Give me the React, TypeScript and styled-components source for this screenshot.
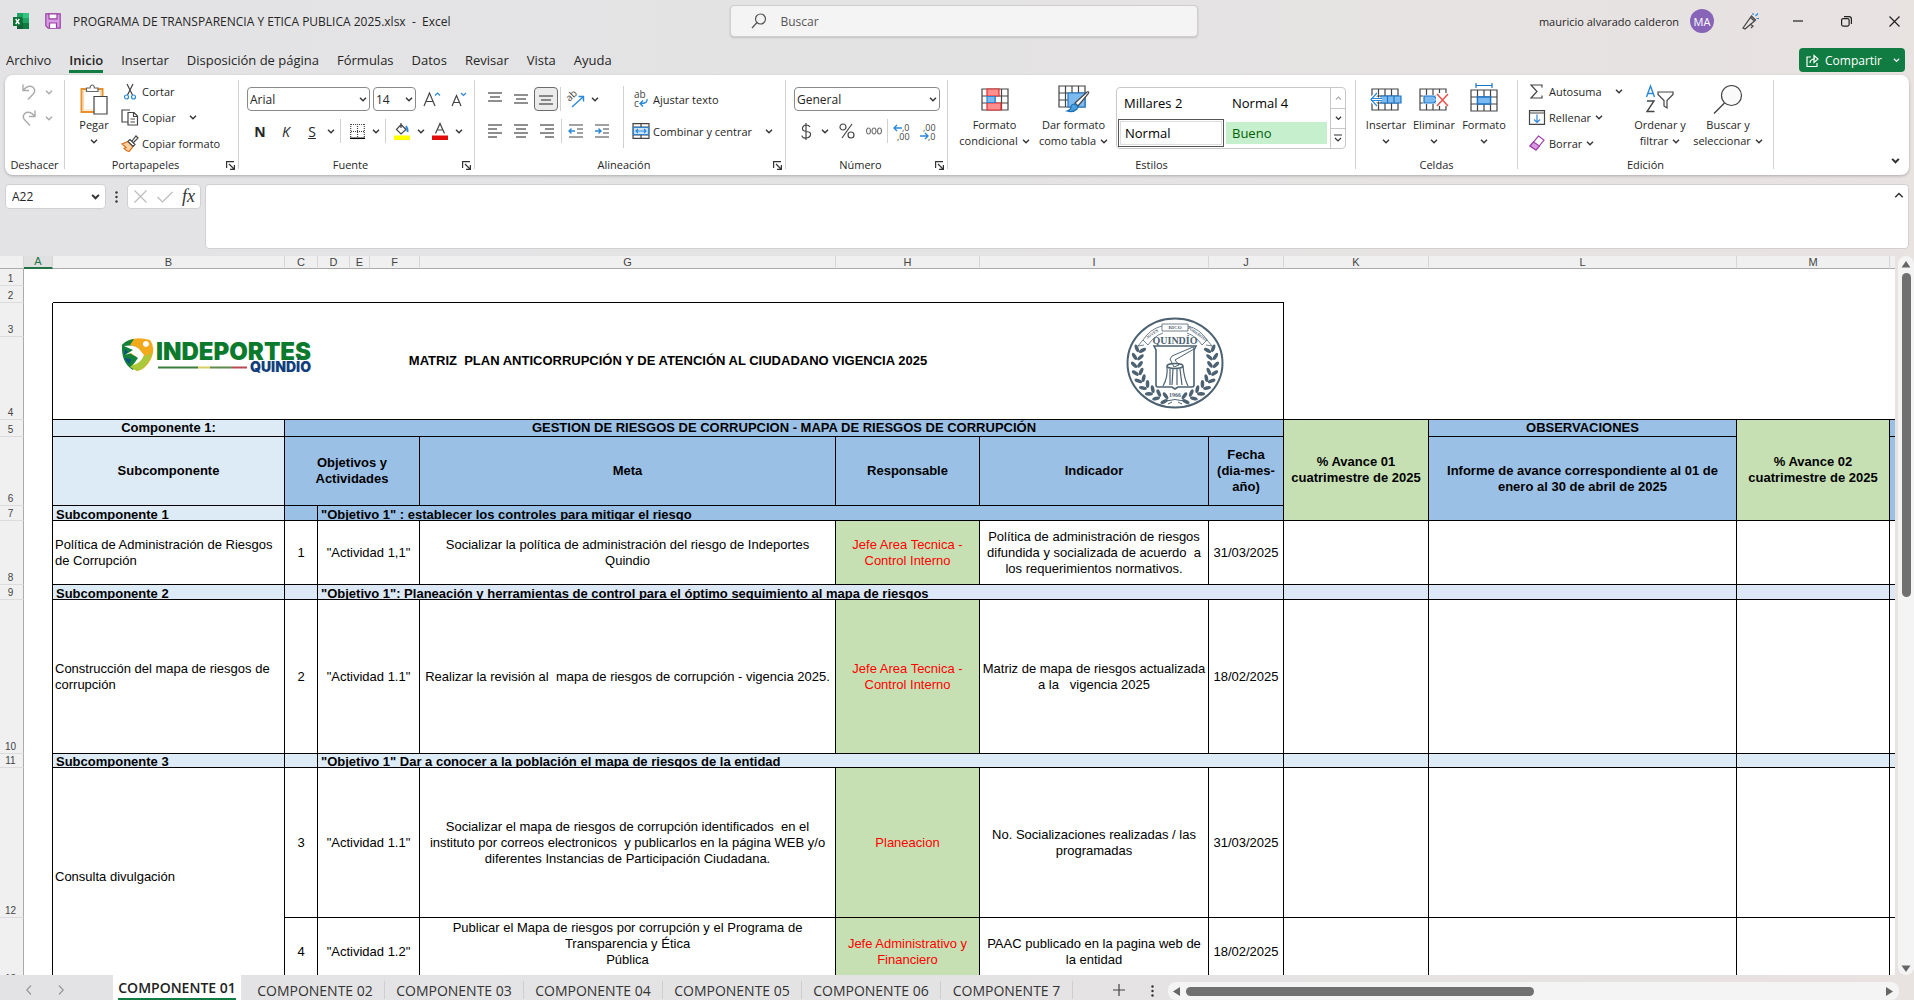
import React from 'react';
import styled, { createGlobalStyle, css } from 'styled-components';

const ui = `"Open Sans", "Noto Sans", sans-serif`;
const sheetFont = `"Liberation Sans", Arial, sans-serif`;
const ink = '#262626';
const blue = '#2b88d8';
const C = { pale: '#ddebf7', ice: '#dde8f7', mid: '#9bc0e6', green: '#c6e0b4' };

const Global = createGlobalStyle`
  * { box-sizing: border-box; }
  html, body, #root { height: 100%; }
  body { margin: 0; overflow: hidden; font-family: ${ui}; color: ${ink}; }
  button, input, select, textarea { font-family: inherit; color: inherit; }
  button { border: 0; background: none; padding: 0; white-space: nowrap; }
  svg { display: block; flex: none; overflow: visible; }
`;

const Window = styled.div`
  height: 100vh;
  display: flex;
  flex-direction: column;
  background: linear-gradient(90deg, #e3e3e5 0%, #e4e3e4 50%, #e8e2e1 100%);
`;

/* ---------- title bar ---------- */
const TitleBar = styled.header`
  display: grid;
  grid-template-columns: minmax(0, 1fr) 468px minmax(0, 1fr);
  align-items: center;
  height: 42px;
  padding-left: 13px;
`;
const TitleLeft = styled.div`
  display: flex;
  align-items: center;
  gap: 16px;
`;
const DocName = styled.span`
  font-size: 12px;
  margin-left: -4px;
  white-space: pre;
`;
const Search = styled.label`
  display: flex;
  align-items: center;
  gap: 12px;
  height: 32px;
  padding-left: 20px;
  background: #f5f4f5;
  border: 1px solid #cfcdce;
  border-radius: 4px;
  box-shadow: 0 1px 2px rgba(0, 0, 0, 0.15);
  input {
    flex: 1;
    border: 0;
    outline: 0;
    background: none;
    font-size: 12px;
  }
  input::placeholder { color: #555; opacity: 1; }
`;
const TitleRight = styled.div`
  display: flex;
  align-items: center;
  justify-content: flex-end;
  padding-right: 8px;
  font-size: 11px;
`;
const Avatar = styled.span`
  display: flex;
  align-items: center;
  justify-content: center;
  width: 24px;
  height: 24px;
  margin: 0 12px 0 11px;
  border-radius: 50%;
  background: #8764b8;
  color: #fff;
  font-size: 11px;
`;
const WinButton = styled.button`
  display: flex;
  align-items: center;
  justify-content: center;
  width: 48px;
  height: 32px;
  &:last-child { width: 24px; margin-left: 12px; }
`;

/* ---------- ribbon tabs ---------- */
const TabBar = styled.nav`
  display: flex;
  align-items: center;
  height: 33px;
  padding: 3px 9px 0 6px;
`;
const TabLink = styled.a<{ $active?: boolean }>`
  display: block;
  margin-right: 18px;
  height: 25px;
  padding-top: 3px;
  color: ${ink};
  font-size: 13px;
  line-height: 18px;
  text-decoration: none;
  white-space: nowrap;
  ${(p) => p.$active && css`
    font-weight: 600;
    border-bottom: 3px solid #107c41;
  `}
`;
const Share = styled.button`
  display: flex;
  align-items: center;
  gap: 6px;
  width: 106px;
  height: 24px;
  margin-left: auto;
  padding: 0 5px 0 7px;
  border-radius: 4px;
  background: #107c41;
  color: #fff;
  font-size: 12px;
  svg:last-child { margin-left: auto; }
`;

/* ---------- ribbon ---------- */
const Ribbon = styled.section`
  display: flex;
  height: 100px;
  margin: 0 5px;
  background: #fff;
  border-radius: 8px;
  box-shadow: 0 1px 3px rgba(0, 0, 0, 0.25);
`;
const GroupBox = styled.div<{ $w: number }>`
  display: flex;
  flex-direction: column;
  flex: 0 0 ${(p) => p.$w}px;
`;
const GroupBody = styled.div<{ $left?: number; $gap?: number }>`
  display: flex;
  height: 81px;
  gap: ${(p) => p.$gap ?? 0}px;
  padding-left: ${(p) => p.$left ?? 0}px;
`;
const GroupFoot = styled.div`
  display: flex;
  align-items: center;
  height: 18px;
  span {
    flex: 1;
    text-align: center;
    font-size: 11px;
    line-height: 18px;
  }
  button { width: 12px; }
`;
const Separator = styled.div`
  width: 1px;
  margin: 5px 0 6px;
  background: #d0d0d0;
`;
const Stack = styled.div<{ $w?: number }>`
  display: flex;
  flex-direction: column;
  width: ${(p) => (p.$w ? `${p.$w}px` : 'auto')};
  padding-top: 4px;
`;
const ToolRows = styled.div`
  display: flex;
  flex-direction: column;
  gap: 6px;
  padding-top: 11px;
`;
const Row = styled.div`
  display: flex;
  align-items: center;
  height: 26px;
`;
const Tool = styled.button<{ $on?: boolean; $w?: number }>`
  display: flex;
  align-items: center;
  justify-content: center;
  width: ${(p) => p.$w ?? 26}px;
  height: 24px;
  font-size: 14px;
  ${(p) => p.$on && css`
    background: #ebebeb;
    border: 1px solid #6b6b6b;
    border-radius: 4px;
  `}
`;
const Divider = styled.div<{ $m?: number; $tall?: boolean }>`
  width: 1px;
  height: ${(p) => (p.$tall ? 62 : 24)}px;
  margin: ${(p) => (p.$tall ? 11 : 0)}px ${(p) => p.$m ?? 1}px 0;
  background: #d0d0d0;
`;
const TextTool = styled.button<{ $chev?: number }>`
  display: flex;
  align-items: center;
  gap: 3px;
  height: 26px;
  font-size: 11px;
  svg:first-child { width: 18px; }
  span + svg { margin-left: ${(p) => p.$chev ?? 1}px; }
`;
const BigTool = styled.button<{ $w: number }>`
  display: flex;
  flex-direction: column;
  align-items: center;
  width: ${(p) => p.$w}px;
  padding-top: 6px;
  font-size: 11px;
  line-height: 16px;
  text-align: center;
`;
const BigIcon = styled.span`
  display: flex;
  align-items: center;
  height: 36px;
`;
const BigLine = styled.span`
  display: flex;
  align-items: center;
  justify-content: center;
  gap: 4px;
  height: 16px;
`;
const PickWrap = styled.label<{ $w: number }>`
  position: relative;
  display: block;
  width: ${(p) => p.$w}px;
  margin-right: 3px;
  select {
    appearance: none;
    width: 100%;
    height: 24px;
    padding: 0 2px;
    border: 1px solid #8a8a8a;
    border-radius: 4px;
    background: #fff;
    font-size: 12px;
  }
  svg { position: absolute; right: 3px; top: 10px; }
`;
const Gallery = styled.div`
  display: flex;
  width: 230px;
  height: 62px;
  margin: 12px 0 0 3px;
  border: 1px solid #c8c8c8;
  border-radius: 4px;
`;
const Styles = styled.div`
  flex: 1;
  display: grid;
  grid-template-columns: 106px 101px;
  grid-template-rows: 30px 29px;
  column-gap: 2px;
  align-items: center;
  padding-left: 1px;
`;
const StyleItem = styled.button<{ $kind?: 'sel' | 'good' }>`
  height: 24px;
  padding-left: 6px;
  text-align: left;
  font-size: 13px;
  color: #000;
  ${(p) => p.$kind === 'sel' && css`height: 28px; border: 1px solid #555; outline: 1px solid #ddd; outline-offset: -3px;`}
  ${(p) => p.$kind === 'good' && css`height: 22px; background: #c6efce; color: #006100;`}
`;
const GalleryNav = styled.div`
  display: grid;
  grid-template-rows: 1fr 1fr 1fr;
  width: 15px;
  border-left: 1px solid #c8c8c8;
  button { display: flex; align-items: center; justify-content: center; }
  button + button { border-top: 1px solid #c8c8c8; }
`;
const Collapse = styled.button`
  display: flex;
  align-items: flex-end;
  margin: 0 9px 11px auto;
`;

/* ---------- formula bar ---------- */
const FormulaBar = styled.section`
  display: flex;
  align-items: flex-start;
  padding: 9px 5px 7px;
`;
const Field = styled.div<{ $w: number }>`
  display: flex;
  align-items: center;
  justify-content: space-between;
  width: ${(p) => p.$w}px;
  height: 25px;
  padding: 0 5px 0 6px;
  border: 1px solid #d2d0d1;
  border-radius: 4px;
  background: #fff;
  input {
    width: 60px;
    padding: 0;
    border: 0;
    background: none;
    font-size: 12px;
    outline: 0;
  }
`;
const Grip = styled.div<{ $top: number }>`
  display: flex;
  justify-content: center;
  width: 21px;
  padding-top: ${(p) => p.$top}px;
`;
const FormulaBox = styled.div`
  display: flex;
  flex: 1;
  height: 65px;
  margin-left: 4px;
  padding-right: 4px;
  border: 1px solid #d2d0d1;
  border-radius: 4px;
  background: #fff;
  textarea { flex: 1; border: 0; resize: none; outline: 0; background: none; }
  button { align-self: flex-start; padding-top: 7px; }
`;
const FxText = styled.span`
  font: italic 400 18px "Liberation Serif", serif;
  color: #333;
`;

/* ---------- sheet ---------- */
const Main = styled.main`
  display: flex;
  flex: 1;
  min-height: 0;
`;
const SheetView = styled.div`
  flex: 1;
  min-width: 0;
  overflow: hidden;
  background: #fff;
`;
const Sheet = styled.table`
  width: 2198px;
  table-layout: fixed;
  border-collapse: separate;
  border-spacing: 0;
  font-family: ${sheetFont};
  font-size: 13px;
  line-height: 16px;
  color: #000;
`;
const Col = styled.col<{ $w: number }>`
  width: ${(p) => p.$w}px;
`;
const Tr = styled.tr<{ $h: number }>`
  height: ${(p) => p.$h}px;
`;
const ColHead = styled.th<{ $on?: boolean }>`
  height: 13px;
  padding: 0;
  background: #f0f0f0;
  border-right: 1px solid #d6d6d6;
  border-bottom: 1px solid #ababab;
  color: #444;
  font-size: 11px;
  line-height: 11px;
  font-weight: 400;
  ${(p) => p.$on && css`background: #e0e0e0; color: #217346; border-bottom: 2px solid #217346;`}
`;
const RowHead = styled.th`
  padding: 0 2px 1px 0;
  background: #f0f0f0;
  border-right: 1px solid #ababab;
  border-bottom: 1px solid #dcdcdc;
  color: #444;
  font-size: 10px;
  line-height: 11px;
  font-weight: 400;
  vertical-align: bottom;
`;
const Cell = styled.td<{
  $bg?: string; $bold?: boolean; $left?: boolean; $red?: boolean; $plain?: boolean; $noRight?: boolean; $noBottom?: boolean;
}>`
  padding: 0 ${(p) => (p.$left ? 2 : 0)}px;
  background: ${(p) => p.$bg ?? 'transparent'};
  color: ${(p) => (p.$red ? '#f00' : '#000')};
  font-weight: ${(p) => (p.$bold ? 700 : 400)};
  text-align: ${(p) => (p.$left ? 'left' : 'center')};
  vertical-align: middle;
  white-space: pre-wrap;
  border-right: ${(p) => (p.$plain || p.$noRight ? 0 : 1)}px solid #000;
  border-bottom: ${(p) => (p.$plain || p.$noBottom ? 0 : 1)}px solid #000;
`;
const Clip = styled.div`
  height: 13px;
  overflow: hidden;
  padding-left: 1px;
  line-height: 15px;
  white-space: pre;
`;
const Banner = styled.div`
  display: grid;
  grid-template-columns: 1fr auto 1fr;
  align-items: center;
  padding: 0 59px;
  svg:first-child { margin: 0 0 12px 8px; }
  svg:last-child { justify-self: end; margin-top: 4px; }
`;

/* ---------- scroll bars and sheet tabs ---------- */
const VScroll = styled.div`
  display: flex;
  flex-direction: column;
  align-items: center;
  width: 16px;
  margin-left: 3px;
  padding: 4px 0 2px;
  border-radius: 8px;
  background: #f4f4f4;
  svg:last-child { margin-top: auto; }
`;
const VThumb = styled.div`
  width: 9px;
  height: 324px;
  margin-top: 4px;
  border-radius: 5px;
  background: #707070;
`;
const Bottom = styled.footer`
  display: flex;
  height: 25px;
`;
const Arrows = styled.div`
  display: flex;
  align-items: center;
  gap: 26px;
  width: 113px;
  padding: 5px 0 0 26px;
`;
const SheetTab = styled.button<{ $active?: boolean }>`
  display: flex;
  align-items: center;
  justify-content: center;
  width: 139px;
  height: 18px;
  margin-top: 6px;
  border-right: 1px solid #cfcdce;
  font-size: 14px;
  color: #333;
  &:last-of-type { width: 132px; }
  ${(p) => p.$active && css`
    width: 128px;
    height: 25px;
    margin: 0 5px 0 0;
    padding: 0 6px;
    border: 0;
    background: #fff;
    span {
      height: 25px;
      padding-top: 3px;
      line-height: 20px;
      font-weight: 600;
      border-bottom: 2px solid #107c41;
      color: #222;
    }
  `}
`;
const TabStrip = styled.div`
  display: flex;
`;
const AddTab = styled.button`
  margin: 5px 17px 0 40px;
`;
const HScroll = styled.div`
  display: flex;
  align-items: center;
  flex: 1;
  height: 18px;
  margin: 7px 15px 0 5px;
  padding: 0 4px;
  border-radius: 8px;
  background: #f4f4f4;
  svg:last-child { margin-left: auto; }
`;
const HThumb = styled.div`
  width: 348px;
  height: 9px;
  margin-left: 4px;
  border-radius: 5px;
  background: #707070;
`;

/* ---------- icons ---------- */
const Chev = ({ s = 8, up = false, c = '#333', w = 1.4 }: { s?: number; up?: boolean; c?: string; w?: number }) => (
  <svg width={s} height={s * 0.625} viewBox="0 0 8 5" fill="none" stroke={c} strokeWidth={w}>
    <path d={up ? 'M1 4.2 4 1.2 7 4.2' : 'M1 .8 4 3.8 7 .8'} />
  </svg>
);
const Svg = ({ w = 16, h = 16, children, c = '#444' }: { w?: number; h?: number; children: React.ReactNode; c?: string }) => (
  <svg width={w} height={h} viewBox={`0 0 ${w} ${h}`} fill="none" stroke={c} strokeWidth={1.2}>{children}</svg>
);
const Launcher = () => (
  <Svg w={9} h={9} c="#333"><path d="M.6 7V.6H8M3 3l5 5M8.4 4v4.4H4" /></Svg>
);
const Tri = ({ d }: { d: 'up' | 'down' | 'left' | 'right' }) => {
  const p = { up: 'M5 1 9.5 7.5H.5Z', down: 'M5 8 .5 1.5h9Z', left: 'M1 4.5 8 0v9Z', right: 'M8 4.5 1 0v9Z' }[d];
  return <svg width="10" height="9" viewBox="0 0 10 9"><path d={p} fill="#666" /></svg>;
};
const Lines = ({ rows }: { rows: [number, number, number][] }) => (
  <Svg w={14} h={14}>
    {rows.map(([x, y, l]) => <path key={y} d={`M${x} ${y}h${l}`} />)}
  </Svg>
);
const ExcelLogo = () => (
  <svg width="16" height="16" viewBox="0 0 16 16">
    <path d="M4 0h7v5H4z" fill="#21a366" /><path d="M10 0h6v5h-6z" fill="#33c481" />
    <path d="M4 5h6v5H4z" fill="#107c41" /><path d="M10 5h6v5h-6z" fill="#21a366" />
    <path d="M4 10h12v6H4z" fill="#185c37" /><path d="M10 10h6v6h-6z" fill="#107c41" />
    <path d="M0 4h9v9H0z" fill="#0f7038" />
    <path d="m2.7 6 3.6 5M6.3 6l-3.6 5" stroke="#fff" strokeWidth="1.4" />
  </svg>
);
const SaveIcon = () => (
  <Svg c="#9b3fa5"><path d="M.8.8h14.400v14.400H3.200L.8 12.800Z" fill="#d69be0" /><path d="M4 .8h8v5H4zM4.500 15v-5h7v5" fill="#fff" /></Svg>
);
const Undo = ({ flip = false }: { flip?: boolean }) => (
  <svg width="14" height="16" viewBox="0 0 14 16" fill="none" stroke="#aaa" strokeWidth="1.400">
    <g transform={flip ? 'translate(14 0) scale(-1 1)' : undefined}>
      <path d="M1 .5v6h6M1.500 6C4 2.500 8 1 11 3.300c2.500 2.500 2 5 0 7L6 15.500" />
    </g>
  </svg>
);
const Paste = () => (
  <Svg w={28} h={31}>
    <path d="M1.500 5h21v23h-21z" fill="#fff" stroke="#e8912d" strokeWidth="2" />
    <path d="M3.500 7h17v19h-17z" fill="#fff" stroke="#fbd9a8" />
    <path d="M6.500 7.500V4H10c.5-4 4-4 4.500 0H18v3.500z" fill="#fff" stroke="#666" />
    <path d="M14 12.500h13V30H14z" fill="#fff" />
  </Svg>
);
const Scissors = () => (
  <Svg w={18}><path d="m6 0 5.500 11M12 0 6.500 11" /><circle cx="5.500" cy="13" r="2" stroke={blue} /><circle cx="12.500" cy="13" r="2" stroke={blue} /></Svg>
);
const CopyIcon = () => (
  <Svg w={18} h={17}><path d="M7 13H1V1h8M7 3.500h6l3.500 3.500v9H7zM12.500 4v3.500H16M9.500 10h4.500M9.500 13h4.500" /></Svg>
);
const Brush = () => (
  <Svg w={18} h={17}><path d="M1 9 7 6.500l5 5-4 5Q5 16 3 13.500l2-1Z" fill="#fbd0a0" stroke="#d96b14" /><path d="m7 6.500 2-2 5 5-2 2zM11 6l4-5 2 2-4.500 4.500" fill="#fff" /></Svg>
);
const BordersIcon = () => (
  <Svg w={15} h={15}><path d="M1 .5h14M1 7.500h14M.7 0v14M7.500 0v14M14.300 0v14" strokeDasharray="1 1" /><path d="M0 14.300h15" stroke="#000" strokeWidth="1.500" /></Svg>
);
const Bucket = () => (
  <Svg w={16} h={17}><path d="m7 1.500 5 5-5 4.500-4.500-4.500zM7 5V0" /><path d="M12 3q2 3 1.500 6" stroke={blue} strokeWidth="2" /><path d="M0 12.500h16V17H0z" fill="#ff0" stroke="none" /></Svg>
);
const FontColor = () => (
  <Svg w={16} h={17}><path d="m3.500 10.500 4.500-10 4.500 10M5 7h6" /><path d="M0 12.500h16V17H0z" fill="#e00b0b" stroke="none" /></Svg>
);
const FontStep = ({ up = false }: { up?: boolean }) => (
  <Svg w={18} h={16}>
    <path d={up ? 'm1 15 5.500-13L12 15M3 10.500h7' : 'm3 15 4.500-10.500L12 15M4.500 11.500h6'} />
    <path d={up ? 'm12 4.500 2.500-2.500L17 4.500' : 'm12 2 2.500 2.500L17 2'} stroke={blue} />
  </Svg>
);
const IconText = styled.text<{ $s: number }>`
  font: ${(p) => p.$s}px ${ui};
  fill: #444;
  stroke: none;
`;
const Orient = () => (
  <Svg w={18} h={17}><g transform="rotate(-45 6 9)"><IconText $s={10} x="2" y="8">ab</IconText></g><path d="M5 16 16 6M11.500 5.500H16.500V10.500" stroke={blue} strokeWidth="1.400" /></Svg>
);
const WrapIcon = () => (
  <Svg w={18} h={18}><IconText $s={10} x="2" y="8">ab</IconText><IconText $s={10} x="2" y="17">c</IconText><path d="M15 9q1 4.500-6.500 4.500M11 10.500l-3 3 3 3" stroke={blue} strokeWidth="1.400" /></Svg>
);
const MergeIcon = () => (
  <Svg w={18}><path d="M1 .7h16v14.600H1zM1 4h16M1 12h16M9 1v3M9 12v3" /><path d="M1.500 4.500h15v7h-15z" fill="#cfe6fa" stroke={blue} /><path d="M4 8h10M6 6 4 8l2 2M12 6l2 2-2 2" stroke={blue} /></Svg>
);
const Dent = ({ out = false }: { out?: boolean }) => (
  <Svg w={14} h={14}><path d="M0 1h14M8 5h6M8 9h6M0 13h14" /><path d={out ? 'M0 7h6M2.500 4.500 0 7l2.500 2.500' : 'M0 7h6M3.500 4.500 6 7 3.500 9.500'} stroke={blue} strokeWidth="1.400" /></Svg>
);
const Decimal = ({ add = false }: { add?: boolean }) => (
  <Svg w={18} h={17}>
    <IconText $s={9} x={add ? 9 : 4} y="8">{add ? ',0' : ',00'}</IconText>
    <IconText $s={9} x={add ? 4 : 9} y="17">{add ? ',00' : ',0'}</IconText>
    <path d={add ? 'M1 5h8M4 2 1 5l3 3' : 'M1 13h8M6 10l3 3-3 3'} stroke={blue} strokeWidth="1.400" />
  </Svg>
);
const gridPath = 'M1 1h26v21H1zM1 8h26M1 15h26M7.500 1v21M14 1v21M20.500 1v21';
const CondIcon = () => (
  <Svg w={28} h={23}><path d={gridPath} /><path d="M6 1h12v7H6zM6 15h14v7H6z" fill="#ff8f8f" stroke="#e03030" /><path d="M6 8.500h8v6H6z" fill="#7dbaf0" stroke={blue} /></Svg>
);
const TableIcon = () => (
  <Svg w={32} h={28}><path d={gridPath} /><path d="M10 8h17v14H10z" fill="#7dbaf0" stroke="#1b76c9" /><path d="m17 18 12-11q3-1 1 2L20 21z" fill="#fff" /><path d="M9 26q4-1 4-4t4-3q4 2 2 5-4 4-10 2z" fill="#4c9fe0" stroke="#1b6fb5" /></Svg>
);
const InsertIcon = () => (
  <Svg w={32} h={23}><g transform="translate(1 0)"><path d={gridPath} /></g><path d="M11 8h20v7H11z" fill="#7dbaf0" stroke="#1b76c9" /><path d="M17.500 8v7M24 8v7" stroke="#1b76c9" /><path d="M7 5 1 11.500 7 18M1 11.500h11" stroke="#fff" strokeWidth="4" /><path d="M7 5 1 11.500 7 18M1 10.500h11M1 12.500h11" stroke={blue} /></Svg>
);
const DeleteIcon = () => (
  <Svg w={30} h={23}><path d={gridPath} /><path d="M4 7h12l4 4.500-4 4.500H4z" fill="#fff" stroke="none" /><path d="M5 8h10l4 3.500-4 3.500H5z" fill="#7dbaf0" stroke="#1b76c9" /><path d="M17 5h12v13H17z" fill="#fff" stroke="none" /><path d="m18 6 11 12M29 6 18 18" stroke="#f0504a" strokeWidth="1.500" /></Svg>
);
const FormatIcon = () => (
  <Svg w={28} h={32}><path d="M6 2.500h16M6 0v5M22 0v5" stroke="#1b76c9" /><g transform="translate(0 6)"><path d={gridPath} /><path d="M7.500 8h13v7h-13z" fill="#7dbaf0" stroke="#1b76c9" strokeWidth="1.500" /></g></Svg>
);
const SortIcon = () => (
  <Svg w={30} h={28}><path d="m1.500 12 4-11 4 11M3 8.500h5.500" stroke={blue} strokeWidth="1.400" /><path d="M2 16h7L2 26.500h7.500" strokeWidth="1.400" /><path d="M13 7h15v2.500l-6 6V23l-3-2v-5.500l-6-6z" /></Svg>
);
const FindIcon = () => (
  <Svg w={30} h={30}><circle cx="18.500" cy="11.500" r="10" fill="#fafafa" /><path d="M11.500 19 1 29.500" strokeWidth="1.400" /></Svg>
);
const SigmaIcon = () => <Svg w={18} h={15}><path d="M14 3.500V1H3l6 6.500L3 14h11v-2.500" /></Svg>;
const FillIcon = () => <Svg w={18} h={15}><path d="M1.500.7h15v13.600h-15zM1.500 3h15" /><path d="M9 4.500v8M6 9.500l3 3 3-3" stroke={blue} /></Svg>;
const EraseIcon = () => <Svg w={18} h={16} c="#a040a8"><path d="m10.500 1 5.500 4L8 15l-6-4z" fill="#fff" /><path d="m5.500 7 6 4L8 15l-6-4z" fill="#d69be0" /></Svg>;

const LogoText = styled.text<{ $s: number; $c: string }>`
  font: 900 ${(p) => p.$s}px Inter, sans-serif;
  fill: ${(p) => p.$c};
`;
const Logo = () => (
  <svg width="197" height="36" viewBox="0 0 197 36">
    <path d="M2 8Q12-2 30 3q6 8 1 19-6 11-14 12Q2 28 2 8z" fill="#f2a91c" />
    <path d="M2 8q4-5 12-6l-4 6 8 3-9 5 10 5-6 12Q1 26 2 8z" fill="#12813b" />
    <path d="m10 30 10-9 12-5q-4 15-15 18z" fill="#a9c93a" />
    <path d="M4 9q10-2 15 3l5 6q-3 8-11 10l5-7-7-5-6 2 8-5zM26 4a3 3 0 1 1-.1 0z" fill="#fff" />
    <path d="m4 21 5 6 2-5zM5 12l3 3-4 3z" fill="#0a4f86" />
    <LogoText $s={24} $c="#0b7a2d" x="36" y="23">INDEPORTES</LogoText>
    <LogoText $s={14} $c="#123f7c" x="130" y="35">QUINDÍO</LogoText>
    <path d="M38 30.500h40" stroke="#3c7d3c" strokeWidth="2" /><path d="M78 30.500h12" stroke="#d8cf5e" strokeWidth="2" />
    <path d="M90 30.500h22" stroke="#5f8a4c" strokeWidth="2" /><path d="M112 30.500h15" stroke="#b84a55" strokeWidth="2" />
  </svg>
);
const SealText = styled.text<{ $s: number }>`
  font: 700 ${(p) => p.$s}px "Liberation Serif", serif;
  fill: #4c6272;
  stroke: none;
  text-anchor: middle;
`;
const leafAngles = [104, 116, 128, 140, 152, 164, 176, 188, 200];
const Seal = () => (
  <svg width="98" height="92" viewBox="0 0 98 92" fill="none" stroke="#4c6272">
    <ellipse cx="49" cy="46" rx="47.500" ry="44.500" strokeWidth="2" />
    {leafAngles.map((a) => {
      const r = (a * Math.PI) / 180;
      const x = 38 * Math.cos(r);
      const y = 37 * Math.sin(r);
      return [-1, 1].map((s) => (
        <g key={`${a}${s}`} transform={`translate(${49 + s * x} ${46 + y}) scale(${s} 1) rotate(${a - 180})`} fill="#4c6272" stroke="none">
          <ellipse cx="-3" cy="-1" rx="4" ry="1.800" transform="rotate(50 -3 -1)" />
          <ellipse cx="3" cy="-1" rx="4" ry="1.800" transform="rotate(-50 3 -1)" />
        </g>
      ));
    })}
    <path d="M36 7h26v7H36zM36 9q-12 3-19 14l5 5q6-9 15-12M62 9q12 3 19 14l-5 5q-6-9-15-12M17 23l-5 6 6-1M81 23l5 6-6-1" fill="#fff" strokeWidth=".8" />
    <SealText $s={5} x="49" y="12">RICO</SealText>
    <SealText $s={4} transform="translate(27 18) rotate(-35)">JOVEN</SealText>
    <SealText $s={4} transform="translate(71 18) rotate(35)">PODEROSO</SealText>
    <SealText $s={10} x="49" y="27">QUINDÍO</SealText>
    <path d="M28 29h42l-2 4v35q0 2-2 2H52l-3 2-3-2H32q-2 0-2-2V33z" strokeWidth="1.600" fill="#fff" />
    <path d="m46 39 21-9 1 2-19 11 4 5-5 2-4-8z" strokeWidth="1" />
    <ellipse cx="49" cy="49" rx="8" ry="2.500" strokeWidth="1.400" />
    <path d="M41 49q1 12-4 20M57 49q1 12 5 20M44 52v16M47 52l-1 16M51 52v16M54 52l2 16" strokeWidth="1.200" />
    <SealText $s={6} x="49" y="80">1966</SealText>
    <path d="M40 84q9-3 18 0M42 87l4-2M56 87l-4-2" />
  </svg>
);

/* ---------- parts ---------- */
const Group = ({ w, name, launch, left, gap, children }: {
  w: number; name: string; launch?: boolean; left?: number; gap?: number; children: React.ReactNode;
}) => (
  <>
    <GroupBox $w={w}>
      <GroupBody $left={left} $gap={gap}>{children}</GroupBody>
      <GroupFoot><span>{name}</span>{launch && <button aria-label={name}><Launcher /></button>}</GroupFoot>
    </GroupBox>
    <Separator />
  </>
);
const Pick = ({ w, label, value }: { w: number; label: string; value: string }) => (
  <PickWrap $w={w}><select aria-label={label} defaultValue={value}><option>{value}</option></select><Chev /></PickWrap>
);
const Big = ({ w, icon, a, b }: { w: number; icon: React.ReactNode; a: string; b?: string }) => (
  <BigTool $w={w}><BigIcon>{icon}</BigIcon><BigLine>{a}</BigLine><BigLine>{b}<Chev /></BigLine></BigTool>
);
const ChevTool = ({ w = 12, label }: { w?: number; label: string }) => <Tool $w={w} aria-label={label}><Chev /></Tool>;

const RibbonBar = () => (
  <Ribbon>
    <Group w={59} name="Deshacer" left={11}>
      <Stack>
        <Row><Tool aria-label="Deshacer"><Undo /></Tool><Tool $w={14} aria-label="Más deshacer"><Chev c="#aaa" /></Tool></Row>
        <Row><Tool aria-label="Rehacer"><Undo flip /></Tool><Tool $w={14} aria-label="Más rehacer"><Chev c="#aaa" /></Tool></Row>
      </Stack>
    </Group>
    <Group w={173} name="Portapapeles" launch left={6} gap={4}>
      <Big w={46} icon={<Paste />} a="Pegar" />
      <Stack>
        <TextTool><Scissors /><span>Cortar</span></TextTool>
        <TextTool $chev={10}><CopyIcon /><span>Copiar</span><Chev /></TextTool>
        <TextTool><Brush /><span>Copiar formato</span></TextTool>
      </Stack>
    </Group>
    <Group w={235} name="Fuente" launch left={8}>
      <ToolRows>
        <Row>
          <Pick w={123} label="Fuente" value="Arial" /><Pick w={43} label="Tamaño" value="14" />
          <Tool aria-label="Aumentar"><FontStep up /></Tool><Tool aria-label="Disminuir"><FontStep /></Tool>
        </Row>
        <Row>
          <Tool><b>N</b></Tool><Tool><i>K</i></Tool><Tool><u>S</u></Tool><ChevTool label="Subrayado" />
          <Divider $m={3} /><Tool aria-label="Bordes"><BordersIcon /></Tool><ChevTool label="Más bordes" />
          <Divider $m={3} /><Tool aria-label="Relleno"><Bucket /></Tool><ChevTool label="Más rellenos" />
          <Tool aria-label="Color de fuente"><FontColor /></Tool><ChevTool label="Más colores" />
        </Row>
      </ToolRows>
    </Group>
    <Group w={310} name="Alineación" launch left={7} gap={5}>
      <ToolRows>
        <Row>
          <Tool aria-label="Arriba"><Lines rows={[[0, 1, 14], [2, 5, 10], [0, 9, 14]]} /></Tool>
          <Tool aria-label="Medio"><Lines rows={[[0, 3, 14], [2, 7, 10], [0, 11, 14]]} /></Tool>
          <Tool $on $w={24} aria-label="Abajo"><Lines rows={[[0, 4, 14], [2, 8, 10], [0, 12, 14]]} /></Tool>
          <Divider $m={2} /><Tool aria-label="Orientación"><Orient /></Tool><ChevTool label="Más orientación" />
        </Row>
        <Row>
          <Tool aria-label="Izquierda"><Lines rows={[[0, 1, 14], [0, 5, 9], [0, 9, 14], [0, 13, 9]]} /></Tool>
          <Tool aria-label="Centro"><Lines rows={[[0, 1, 14], [2, 5, 10], [0, 9, 14], [2, 13, 10]]} /></Tool>
          <Tool aria-label="Derecha"><Lines rows={[[0, 1, 14], [5, 5, 9], [0, 9, 14], [5, 13, 9]]} /></Tool>
          <Divider /><Tool aria-label="Disminuir sangría"><Dent out /></Tool><Tool aria-label="Aumentar sangría"><Dent /></Tool>
        </Row>
      </ToolRows>
      <Divider $tall $m={3} />
      <ToolRows>
        <TextTool><WrapIcon /><span>Ajustar texto</span></TextTool>
        <TextTool $chev={10}><MergeIcon /><span>Combinar y centrar</span><Chev /></TextTool>
      </ToolRows>
    </Group>
    <Group w={161} name="Número" launch left={8}>
      <ToolRows>
        <Row><Pick w={146} label="Formato de número" value="General" /></Row>
        <Row>
          <Tool $w={24} aria-label="Moneda"><Svg w={10} h={17}><path d="M9 4Q8 2 5 2T1.500 5t4 3.500 4 3.300T5 15t-4-2.500M5 0v17" /></Svg></Tool>
          <ChevTool label="Más monedas" w={14} />
          <Tool $w={30} aria-label="Porcentaje"><Svg w={16}><circle cx="4" cy="4" r="3" /><circle cx="12" cy="12" r="3" /><path d="M13 1 3 15" /></Svg></Tool>
          <Tool $w={24} aria-label="Millares"><Svg w={16} h={8} c="#777"><ellipse cx="2.500" cy="4" rx="2" ry="3" /><ellipse cx="8" cy="4" rx="2" ry="3" /><ellipse cx="13.500" cy="4" rx="2" ry="3" /></Svg></Tool>
          <Divider /><Tool aria-label="Aumentar decimales"><Decimal add /></Tool><Tool aria-label="Disminuir decimales"><Decimal /></Tool>
        </Row>
      </ToolRows>
    </Group>
    <Group w={407} name="Estilos" left={7}>
      <Big w={79} icon={<CondIcon />} a="Formato" b="condicional" />
      <Big w={79} icon={<TableIcon />} a="Dar formato" b="como tabla" />
      <Gallery>
        <Styles>
          <StyleItem>Millares 2</StyleItem><StyleItem>Normal 4</StyleItem>
          <StyleItem $kind="sel">Normal</StyleItem><StyleItem $kind="good">Bueno</StyleItem>
        </Styles>
        <GalleryNav>
          <button aria-label="Subir"><Chev s={7} up c="#aaa" /></button>
          <button aria-label="Bajar"><Chev s={7} /></button>
          <button aria-label="Más estilos"><Svg w={8} h={9} c="#333"><path d="M0 1h8M1 4l3 3 3-3" /></Svg></button>
        </GalleryNav>
      </Gallery>
    </Group>
    <Group w={161} name="Celdas" left={6}>
      <Big w={48} icon={<InsertIcon />} a="Insertar" />
      <Big w={48} icon={<DeleteIcon />} a="Eliminar" />
      <Big w={52} icon={<FormatIcon />} a="Formato" />
    </Group>
    <Group w={255} name="Edición" left={10}>
      <Stack $w={98}>
        <TextTool $chev={10}><SigmaIcon /><span>Autosuma</span><Chev /></TextTool>
        <TextTool><FillIcon /><span>Rellenar</span><Chev /></TextTool>
        <TextTool><EraseIcon /><span>Borrar</span><Chev /></TextTool>
      </Stack>
      <Big w={68} icon={<SortIcon />} a="Ordenar y" b="filtrar" />
      <Big w={68} icon={<FindIcon />} a="Buscar y" b="seleccionar" />
    </Group>
    <Collapse aria-label="Contraer cinta"><Chev s={9} w={1.8} /></Collapse>
  </Ribbon>
);

const widths = [24, 29, 232, 33, 32, 20, 50, 416, 144, 229, 75, 145, 308, 153, 308];
const letters = ['A', 'B', 'C', 'D', 'E', 'F', 'G', 'H', 'I', 'J', 'K', 'L', 'M', 'N'];

const Tail = ({ bg }: { bg?: string }) => <><Cell $bg={bg} /><Cell $bg={bg} /><Cell $bg={bg} /><Cell $bg={bg} /></>;
const Line = ({ n, h, children }: { n: number; h: number; children: React.ReactNode }) => (
  <Tr $h={h}><RowHead scope="row">{n}</RowHead>{children}</Tr>
);
const Side = () => <Cell $noBottom />;
const SubRow = ({ n, h, sub, goal, bg, tail }: { n: number; h: number; sub: string; goal: string; bg: string; tail: boolean }) => (
  <Line n={n} h={h}>
    <Side />
    <Cell $bg={C.pale} $bold $left><Clip>{sub}</Clip></Cell>
    <Cell $bg={bg} />
    <Cell $bg={bg} $bold $left colSpan={7}><Clip>{goal}</Clip></Cell>
    {tail ? <Tail bg={bg} /> : <Cell $bg={C.mid} />}
  </Line>
);
const Activity = ({ n, h, sub, span, no, act, meta, who, ind, date }: {
  n: number; h: number; sub?: string; span?: number; no: number; act: string; meta: string; who: string; ind: string; date: string;
}) => (
  <Line n={n} h={h}>
    <Side />
    {sub && <Cell $left rowSpan={span}>{sub}</Cell>}
    <Cell>{no}</Cell>
    <Cell colSpan={3}>{act}</Cell>
    <Cell>{meta}</Cell>
    <Cell $bg={C.green} $red>{who}</Cell>
    <Cell>{ind}</Cell>
    <Cell>{date}</Cell>
    <Tail />
  </Line>
);

const Grid = () => (
  <Sheet>
    <colgroup>{widths.map((w, i) => <Col key={i} $w={w} />)}</colgroup>
    <thead>
      <tr>
        <ColHead aria-label="Seleccionar todo" />
        {letters.map((l) => <ColHead key={l} scope="col" $on={l === 'A'}>{l}</ColHead>)}
      </tr>
    </thead>
    <tbody>
      <Line n={1} h={17}><Cell $plain colSpan={14} /></Line>
      <Line n={2} h={17}><Cell $plain /><Cell $noRight colSpan={9} /><Cell $plain colSpan={4} /></Line>
      <Line n={3} h={34}>
        <Side />
        <Cell colSpan={9} rowSpan={2} $bold>
          <Banner><Logo /><span>{'MATRIZ  PLAN ANTICORRUPCIÓN Y DE ATENCIÓN AL CIUDADANO VIGENCIA 2025'}</span><Seal /></Banner>
        </Cell>
        <Cell $plain colSpan={4} />
      </Line>
      <Line n={4} h={83}><Side /><Cell $noRight colSpan={4} /></Line>
      <Line n={5} h={17}>
        <Side />
        <Cell $bg={C.pale} $bold>Componente 1:</Cell>
        <Cell $bg={C.mid} $bold colSpan={8}>GESTION DE RIESGOS DE CORRUPCION - MAPA DE RIESGOS DE CORRUPCIÓN</Cell>
        <Cell $bg={C.green} $bold rowSpan={3}>{'% Avance 01\ncuatrimestre de 2025'}</Cell>
        <Cell $bg={C.mid} $bold>OBSERVACIONES</Cell>
        <Cell $bg={C.green} $bold rowSpan={3}>{'% Avance 02\ncuatrimestre de 2025'}</Cell>
        <Cell $bg={C.mid} />
      </Line>
      <Line n={6} h={69}>
        <Side />
        <Cell $bg={C.pale} $bold>Subcomponente</Cell>
        <Cell $bg={C.mid} $bold colSpan={4}>{'Objetivos y\nActividades'}</Cell>
        <Cell $bg={C.mid} $bold>Meta</Cell>
        <Cell $bg={C.mid} $bold>Responsable</Cell>
        <Cell $bg={C.mid} $bold>Indicador</Cell>
        <Cell $bg={C.mid} $bold>{'Fecha\n(dia-mes-\naño)'}</Cell>
        <Cell $bg={C.mid} $bold rowSpan={2}>{'Informe de avance correspondiente al 01 de\nenero al 30 de abril de 2025'}</Cell>
        <Cell $bg={C.mid} $noBottom />
      </Line>
      <SubRow n={7} h={15} sub="Subcomponente 1" goal={'"Objetivo 1" : establecer los controles para mitigar el riesgo'} bg={C.mid} tail={false} />
      <Activity n={8} h={64} sub={'Política de Administración de Riesgos\nde Corrupción'} no={1} act={'"Actividad 1,1"'}
        meta={'Socializar la política de administración del riesgo de Indeportes\nQuindio'} who={'Jefe Area Tecnica -\nControl Interno'}
        ind={'Política de administración de riesgos\ndifundida y socializada de acuerdo  a\nlos requerimientos normativos.'} date="31/03/2025" />
      <SubRow n={9} h={15} sub="Subcomponente 2" goal={'"Objetivo 1": Planeación y herramientas de control para el óptimo seguimiento al mapa de riesgos'} bg={C.ice} tail />
      <Activity n={10} h={154} sub={'Construcción del mapa de riesgos de\ncorrupción'} no={2} act={'"Actividad 1.1"'}
        meta="Realizar la revisión al  mapa de riesgos de corrupción - vigencia 2025." who={'Jefe Area Tecnica -\nControl Interno'}
        ind={'Matriz de mapa de riesgos actualizada\na la   vigencia 2025'} date="18/02/2025" />
      <SubRow n={11} h={14} sub="Subcomponente 3" goal={'"Objetivo 1" Dar a conocer a la población el mapa de riesgos de la entidad'} bg={C.pale} tail />
      <Activity n={12} h={150} sub="Consulta divulgación" span={2} no={3} act={'"Actividad 1.1"'}
        meta={'Socializar el mapa de riesgos de corrupción identificados  en el\ninstituto por correos electronicos  y publicarlos en la página WEB y/o\ndiferentes Instancias de Participación Ciudadana.'}
        who="Planeacion" ind={'No. Socializaciones realizadas / las\nprogramadas'} date="31/03/2025" />
      <Activity n={13} h={68} no={4} act={'"Actividad 1.2"'}
        meta={'Publicar el Mapa de riesgos por corrupción y el Programa de\nTransparencia y Ética\nPública\n '}
        who={'Jefe Administrativo y\nFinanciero'} ind={'PAAC publicado en la pagina web de\nla entidad'} date="18/02/2025" />
    </tbody>
  </Sheet>
);

const tabs = ['Archivo', 'Inicio', 'Insertar', 'Disposición de página', 'Fórmulas', 'Datos', 'Revisar', 'Vista', 'Ayuda'];
const sheets = ['COMPONENTE 01', 'COMPONENTE 02', 'COMPONENTE 03', 'COMPONENTE 04', 'COMPONENTE 05', 'COMPONENTE 06', 'COMPONENTE 7'];
const Dots = () => <svg width="3" height="12" viewBox="0 0 3 12" fill="#333"><circle cx="1.500" cy="1.500" r="1.200" /><circle cx="1.500" cy="6" r="1.200" /><circle cx="1.500" cy="10.500" r="1.200" /></svg>;

export default function App() {
  return (
    <Window>
      <Global />
      <TitleBar>
        <TitleLeft><ExcelLogo /><SaveIcon /><DocName>{'PROGRAMA DE TRANSPARENCIA Y ETICA PUBLICA 2025.xlsx  -  Excel'}</DocName></TitleLeft>
        <Search>
          <Svg c="#555"><circle cx="9.500" cy="6" r="5" /><path d="M6 9.500 1 15" /></Svg>
          <input type="search" placeholder="Buscar" aria-label="Buscar" />
        </Search>
        <TitleRight>
          <span>mauricio alvarado calderon</span>
          <Avatar>MA</Avatar>
          <WinButton aria-label="Novedades"><Svg w={18} h={17}><path d="M2 15 9.500 4.500l4 3.500L4 16zM9.500 4.500l1-1.500 4 4-1 1M9 11l3 2-2 2" /><path d="M12 2V0M14.500 3 17 .5M15.500 5.500H18" stroke={blue} /></Svg></WinButton>
          <WinButton aria-label="Minimizar"><Svg w={10} h={10} c="#222"><path d="M0 5h10" /></Svg></WinButton>
          <WinButton aria-label="Restaurar"><Svg w={11} h={11} c="#222"><rect x=".6" y="2.600" width="7.500" height="7.500" rx="1.500" /><path d="M3 .6h5q2.400 0 2.400 2.400v5" /></Svg></WinButton>
          <WinButton aria-label="Cerrar"><Svg w={11} h={11} c="#222"><path d="m.5.5 10 10M10.500.5l-10 10" /></Svg></WinButton>
        </TitleRight>
      </TitleBar>
      <TabBar>
        {tabs.map((t) => <TabLink key={t} href="#" $active={t === 'Inicio'}>{t}</TabLink>)}
        <Share><Svg w={13} h={13} c="#fff"><path d="M5 3H1v9.500h10V9M4 9q0-4 5-4M8 1.500 12 5 8 8.500z" /></Svg>Compartir<Chev s={7} c="#fff" /></Share>
      </TabBar>
      <RibbonBar />
      <FormulaBar>
        <Field $w={101}><input aria-label="Cuadro de nombres" defaultValue="A22" /><Chev s={9} w={1.8} /></Field>
        <Grip $top={7}><Dots /></Grip>
        <Field $w={74}>
          <Svg w={13} h={13} c="#bbb"><path d="m.5.5 12 12M12.500.5l-12 12" /></Svg>
          <Svg w={16} h={12} c="#bbb"><path d="m.5 6 5 5 10-10" /></Svg>
          <FxText>fx</FxText>
        </Field>
        <FormulaBox><textarea aria-label="Barra de fórmulas" /><button aria-label="Contraer"><Chev s={10} up w={1.2} /></button></FormulaBox>
      </FormulaBar>
      <Main>
        <SheetView><Grid /></SheetView>
        <VScroll><Tri d="up" /><VThumb /><Tri d="down" /></VScroll>
      </Main>
      <Bottom>
        <Arrows>
          <Svg w={6} h={10} c="#999"><path d="M5 .5.8 5 5 9.500" /></Svg>
          <Svg w={6} h={10} c="#999"><path d="M1 .5 5.200 5 1 9.500" /></Svg>
        </Arrows>
        <TabStrip>{sheets.map((s, i) => <SheetTab key={s} $active={i === 0}><span>{s}</span></SheetTab>)}</TabStrip>
        <AddTab aria-label="Nueva hoja"><Svg w={12} h={12}><path d="M6 0v12M0 6h12" /></Svg></AddTab>
        <Grip $top={10}><Dots /></Grip>
        <HScroll><Tri d="left" /><HThumb /><Tri d="right" /></HScroll>
      </Bottom>
    </Window>
  );
}
